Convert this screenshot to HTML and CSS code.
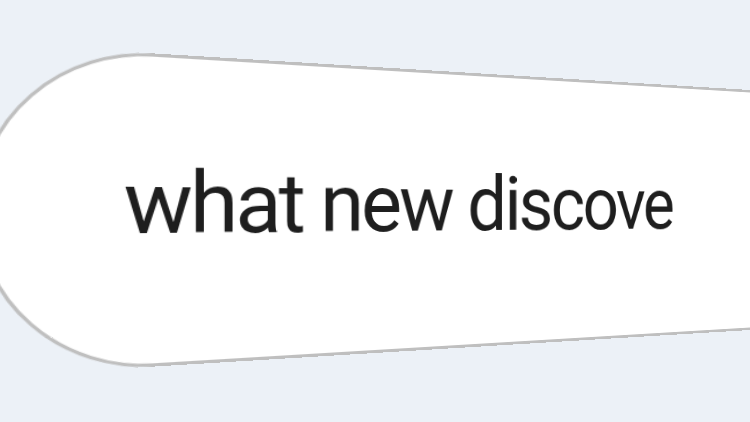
FILE: index.html
```html
<!DOCTYPE html>
<html lang="en">
<head>
<meta charset="utf-8">
<title>Search</title>
<link rel="stylesheet" href="styles.css">
</head>
<body>
<div class="stage">
  <div class="search">
    <span class="query">what new discove</span>
  </div>
</div>
</body>
</html>
```

FILE: styles.css
```css
html, body {
  margin: 0;
  padding: 0;
}
body {
  background: #ecf1f7;
  overflow: hidden;
}
.stage {
  width: 750px;
  height: 422px;
  box-sizing: border-box;
  overflow: hidden;
  padding: 67px 0 0 22px;
  perspective: 625px;
  perspective-origin: 375px 210px;
}
.search {
  width: 1200px;
  height: 286px;
  box-sizing: border-box;
  border: 3px solid #bfbfbf;
  border-radius: 143px;
  background: #ffffff;
  transform-origin: 353px 143px;
  transform: rotateY(15deg);
  display: flex;
  align-items: center;
  padding-left: 115px;
  padding-bottom: 12px;
}
.query {
  font-family: Roboto, "Liberation Sans", Arial, sans-serif;
  font-size: 80px;
  color: #1e1e1e;
  letter-spacing: -2.85px;
  white-space: nowrap;
}
```
